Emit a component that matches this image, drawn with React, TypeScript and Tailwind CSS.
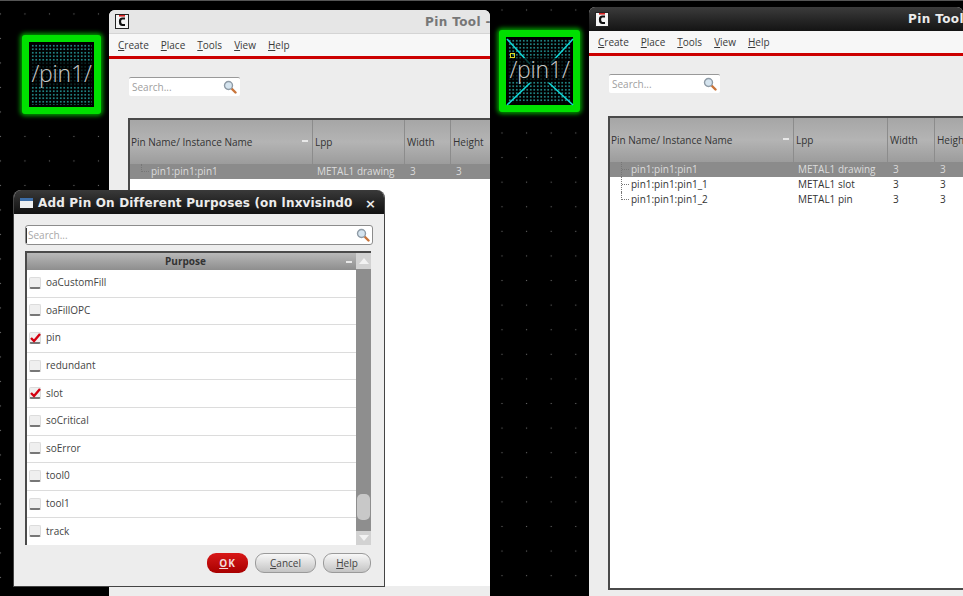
const uiFont = { fontFamily: '"Open Sans", "Noto Sans", sans-serif' };
const titleFont = { fontFamily: '"DejaVu Sans", sans-serif' };

const menus = [
  { key: 'C', rest: 'reate' },
  { key: 'P', rest: 'lace' },
  { key: 'T', rest: 'ools' },
  { key: 'V', rest: 'iew' },
  { key: 'H', rest: 'elp' },
];

const purposes = [
  { label: 'oaCustomFill', on: false },
  { label: 'oaFillOPC', on: false },
  { label: 'pin', on: true },
  { label: 'redundant', on: false },
  { label: 'slot', on: true },
  { label: 'soCritical', on: false },
  { label: 'soError', on: false },
  { label: 'tool0', on: false },
  { label: 'tool1', on: false },
  { label: 'track', on: false },
];

const SearchIcon = () => (
  <svg width="14" height="14" viewBox="0 0 14 14" className="shrink-0">
    <line x1="8.5" y1="8.5" x2="12.5" y2="12.5" stroke="#c9743a" strokeWidth="2.4" strokeLinecap="round" />
    <circle cx="5.5" cy="5.5" r="4" fill="#d5e4ef" stroke="#8f9ba6" strokeWidth="1.4" />
  </svg>
);

const AppIcon = () => (
  <svg width="14" height="15" viewBox="0 0 14 15" className="shrink-0">
    <rect x="0.5" y="0.5" width="13" height="14" fill="#f4f4f4" stroke="#222" />
    <rect x="4" y="1" width="6" height="1.6" fill="#d42020" />
    <path d="M10 4.5 H7.5 Q5 4.5 5 7.5 Q5 11 7.5 11 H10" fill="none" stroke="#111" strokeWidth="2.2" />
  </svg>
);

const PinCell = ({ cross }: { cross?: boolean }) => (
  <div className="relative w-full h-full rounded-[3px] border-[7px] border-[#00e000] shadow-[0_0_4px_2px_#009800] bg-black">
    <div className="absolute inset-[2px] bg-[radial-gradient(circle,#1f8080_0.7px,transparent_1px)] bg-[size:3.5px_3.5px]" />
    {cross && (
      <svg className="absolute -inset-[7px]" width="82" height="83" viewBox="0 0 82 83">
        <g stroke="#12d8d8" strokeWidth="1.6">
          <line x1="8" y1="9" x2="31" y2="34" />
          <line x1="74" y1="9" x2="52" y2="33" />
          <line x1="8" y1="75" x2="31" y2="53" />
          <line x1="74" y1="75" x2="50" y2="53" />
        </g>
        <rect x="11.5" y="23.5" width="4" height="4" fill="none" stroke="#d8d820" />
      </svg>
    )}
    <div className="absolute inset-0 flex items-center justify-center pb-[3px]">
      <span className="text-[23px] leading-none font-light tracking-[-0.2px] text-[#c8c8c8] bg-black/70 whitespace-nowrap" style={uiFont}>
        /pin1/
      </span>
    </div>
  </div>
);

const Row = ({ name, lpp, sel, last, cols }: { name: string; lpp: string; sel?: boolean; last?: boolean; cols: string }) => (
  <div className={`grid ${cols} h-[15px] items-center text-[10px] ${sel ? 'bg-[#8b8b8b] text-[#dcdcdc]' : 'text-[#333]'}`}>
    <div className="relative pl-[21px] whitespace-nowrap">
      <span className={`absolute left-[11px] top-0 w-px border-l border-dotted border-[#777] ${last ? 'h-[8px]' : 'h-[15px]'}`} />
      <span className="absolute left-[12px] top-[7px] w-[7px] border-t border-dotted border-[#777]" />
      {name}
    </div>
    <div className="pl-[4px] whitespace-nowrap">{lpp}</div>
    <div className="pl-[5px]">3</div>
    <div className="pl-[5px]">3</div>
  </div>
);

const PinWindow = ({ dark, cols, rows, tableGap, tableEnd }: {
  dark?: boolean;
  cols: string;
  rows: { name: string; lpp: string }[];
  tableGap: string;
  tableEnd: string;
}) => (
  <div className="flex flex-col w-full h-full bg-[#ededed] rounded-t-md overflow-hidden" style={uiFont}>
    <div className={`relative h-[24px] shrink-0 flex items-center pl-[6px] ${dark ? 'bg-gradient-to-b from-[#3c3c3c] to-[#141414]' : 'bg-[#e6e6e6] border-b border-[#d4d4d4]'}`}>
      <AppIcon />
      <span
        className={`absolute top-[3px] text-[12px] font-bold tracking-[0.4px] whitespace-nowrap ${dark ? 'left-[319px] text-[#ececec]' : 'left-[316px] text-[#777]'}`}
        style={titleFont}
      >
        {dark ? 'Pin Tool' : 'Pin Tool -'}
      </span>
    </div>
    <div className="h-[22px] shrink-0 flex items-center gap-[12px] pl-[9px] pt-px bg-[#f7f7f7] text-[10px] text-[#3a3a3a]">
      {menus.map((m) => (
        <span key={m.key}>
          <span className="underline">{m.key}</span>
          {m.rest}
        </span>
      ))}
    </div>
    <div className="h-[3px] shrink-0 bg-[#cc0000]" />
    <div className={`ml-[20px] w-[111px] h-[19px] shrink-0 flex items-center justify-between pl-[3px] pr-[3px] bg-white rounded-[2px] border-t border-[#999] text-[10px] text-[#a0a0a0] ${tableGap}`}>
      Search...
      <SearchIcon />
    </div>
    <div className={`ml-[19px] w-[400px] flex-1 flex flex-col bg-white border-2 border-r-0 border-[#4a4a4a] ${tableEnd}`}>
      <div className={`grid ${cols} h-[44px] shrink-0 bg-gradient-to-b from-[#a6a6a6] via-[#b4b4b4] to-[#9c9c9c] text-[10px] text-[#333]`}>
        <div className="relative flex items-center pl-px border-r border-[#8c8c8c] whitespace-nowrap">
          Pin Name/ Instance Name
          <span className="absolute right-[4px] top-[20px] w-[6px] h-[2px] bg-[#e8e8e8]" />
        </div>
        <div className="flex items-center pl-[2px] border-r border-[#8c8c8c]">Lpp</div>
        <div className="flex items-center pl-[2px] border-r border-[#8c8c8c]">Width</div>
        <div className="flex items-center pl-[2px]">Height</div>
      </div>
      {rows.map((r, i) => (
        <Row key={r.name} name={r.name} lpp={r.lpp} cols={cols} sel={i === 0} last={i === rows.length - 1} />
      ))}
    </div>
  </div>
);

const Checkbox = ({ on }: { on: boolean }) => (
  <span className="relative w-[12px] h-[12px] shrink-0 rounded-[2px] bg-[#efefef] border border-[#dcdcdc] border-b-2 border-b-[#777]">
    {on && (
      <svg className="absolute -top-[1px] left-0" width="11" height="11" viewBox="0 0 11 11">
        <path d="M1 6 L4 9 L10 2" fill="none" stroke="#d40010" strokeWidth="2.4" />
      </svg>
    )}
  </span>
);

const GreyButton = ({ k, rest, w }: { k: string; rest: string; w: string }) => (
  <div className={`${w} h-[20px] flex items-center justify-center rounded-[9px] border border-[#9a9a9a] bg-gradient-to-b from-[#f8f8f8] to-[#c4c4c4] text-[10px] text-[#444]`}>
    <span><span className="underline">{k}</span>{rest}</span>
  </div>
);

const PurposeDialog = () => (
  <div className="flex flex-col w-full h-full rounded-t-lg overflow-hidden border-x border-b border-[#444] bg-[#ededed]" style={uiFont}>
    <div className="h-[24px] shrink-0 flex items-center pl-[6px] pr-[8px] pt-[2px] bg-gradient-to-b from-[#3a3a3a] to-[#111] text-[#ececec]">
      <svg width="13" height="10" viewBox="0 0 13 10" className="shrink-0">
        <rect width="13" height="10" fill="#eef0f2" />
        <rect width="13" height="3" fill="#3d6ea8" />
      </svg>
      <span className="ml-[5px] flex-1 text-[12px] font-bold tracking-[0.18px] whitespace-nowrap" style={titleFont}>
        Add Pin On Different Purposes (on lnxvisind0
      </span>
      <span className="text-[13px] leading-none font-bold" style={titleFont}>×</span>
    </div>
    <div className="flex flex-col flex-1 px-[11px]">
      <div className="mt-[11px] h-[20px] shrink-0 flex items-center justify-between pr-[2px] bg-white rounded-[3px] border border-[#8c8c8c] text-[10px] text-[#a8a8a8]">
        <span className="border-l border-[#333] pl-px">Search...</span>
        <SearchIcon />
      </div>
      <div className="mt-[6px] mr-[2px] h-[294px] shrink-0 flex bg-white border-l-2 border-t-2 border-[#4a4a4a]">
        <div className="flex-1 flex flex-col">
          <div className="relative h-[17px] shrink-0 flex items-center justify-center pr-[12px] bg-gradient-to-b from-[#b8b8b8] to-[#8e8e8e] text-[10px] font-bold text-[#333]">
            Purpose
            <span className="absolute right-[4px] top-[8px] w-[6px] h-[2px] bg-[#e8e8e8]" />
          </div>
          {purposes.map((p) => (
            <div key={p.label} className="flex-1 flex items-center gap-[5px] pl-[2px] pb-px border-b border-[#dcdcdc] last:border-b-0 text-[10px] text-[#444]">
              <Checkbox on={p.on} />
              {p.label}
            </div>
          ))}
        </div>
        <div className="w-[15px] shrink-0 flex flex-col bg-[#8e8e8e]">
          <div className="h-[16px] flex items-center justify-center bg-[#d2d2d2]">
            <span className="w-0 h-0 border-x-[5px] border-x-transparent border-b-[6px] border-b-[#f2f2f2]" />
          </div>
          <div className="flex-1 flex flex-col justify-end pb-[11px] px-px">
            <div className="h-[26px] rounded-[5px] bg-[#c8c8c8]" />
          </div>
          <div className="h-[14px] flex items-center justify-center bg-[#d2d2d2]">
            <span className="w-0 h-0 border-x-[5px] border-x-transparent border-t-[6px] border-t-[#f2f2f2]" />
          </div>
        </div>
      </div>
      <div className="mt-[8px] mr-[2px] flex justify-end gap-[7px]">
        <div className="w-[41px] h-[20px] flex items-center justify-center rounded-[9px] bg-gradient-to-b from-[#d81818] to-[#a80000] text-[10px] font-bold text-[#f4d8d8] tracking-[1px]">
          <span><span className="underline">O</span>K</span>
        </div>
        <GreyButton k="C" rest="ancel" w="w-[61px]" />
        <GreyButton k="H" rest="elp" w="w-[48px]" />
      </div>
    </div>
  </div>
);

export default function App() {
  const leftRows = [{ name: 'pin1:pin1:pin1', lpp: 'METAL1 drawing' }];
  const rightRows = [
    { name: 'pin1:pin1:pin1', lpp: 'METAL1 drawing' },
    { name: 'pin1:pin1:pin1_1', lpp: 'METAL1 slot' },
    { name: 'pin1:pin1:pin1_2', lpp: 'METAL1 pin' },
  ];

  return (
    <div className="flex w-[963px] h-[596px] overflow-hidden bg-black">
      <div className="relative w-[490px] h-full shrink-0 overflow-hidden border-t border-[#555] bg-black bg-[radial-gradient(circle,#6a6a6a_0.7px,transparent_1px)] bg-[size:24.5px_24.5px] bg-[position:12.7px_0.7px]">
        <div className="absolute left-[22px] top-[34px] w-[79px] h-[79px]">
          <PinCell />
        </div>
        <div className="absolute left-[109px] top-[9px] w-[381px] h-[586px]">
          <PinWindow
            cols="grid-cols-[183px_92px_46px_1fr]"
            rows={leftRows}
            tableGap="mt-[18px] mb-[22px]"
            tableEnd="mb-[10px] border-b-0"
          />
        </div>
        <div className="absolute left-[13px] top-[189px] w-[372px] h-[397px]">
          <PurposeDialog />
        </div>
      </div>
      <div className="relative flex-1 h-full overflow-hidden border-t border-[#555] bg-black bg-[radial-gradient(circle,#6a6a6a_0.7px,transparent_1px)] bg-[size:24.6px_24.6px] bg-[position:-0.3px_-3.3px]">
        <div className="absolute left-[9px] top-[29px] w-[81px] h-[82px]">
          <PinCell cross />
        </div>
        <div className="absolute left-[99px] top-[6px] w-[374px] h-[589px]">
          <PinWindow
            dark
            cols="grid-cols-[184px_94px_47px_1fr]"
            rows={rightRows}
            tableGap="mt-[18px] mb-[23px]"
            tableEnd="mb-[6px]"
          />
        </div>
      </div>
    </div>
  );
}
